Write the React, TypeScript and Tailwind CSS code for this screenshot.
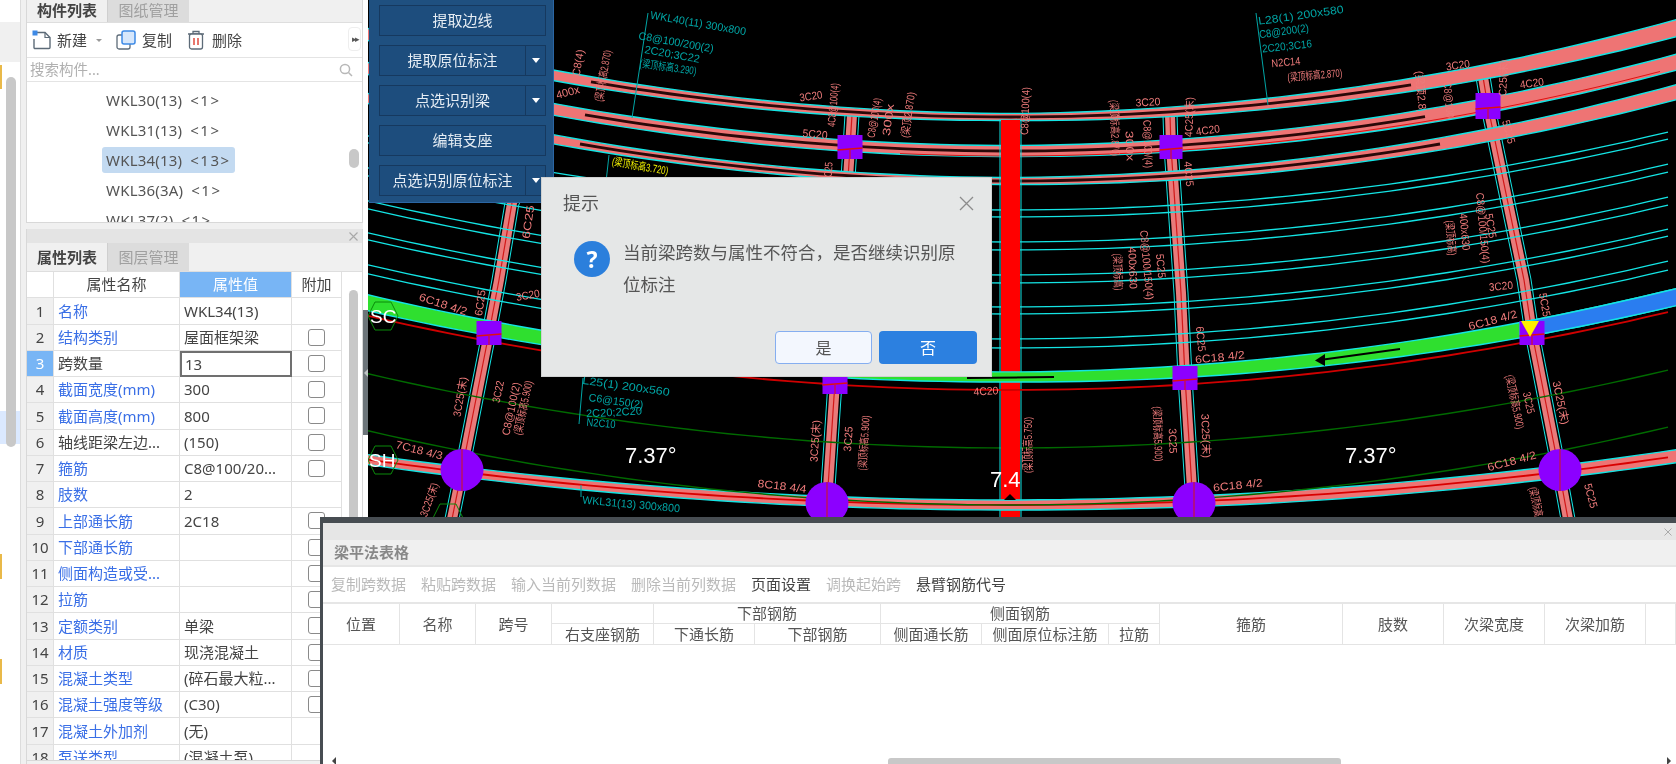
import React from "react";

const P = "#ee7b7b";
const C = "#00a5a5";
const Y = "#f2f200";
const CY = "#14e4e4";

const arc = (yc: number, a: number, x0 = 368, x1 = 1676) => {
  const pts: string[] = [];
  for (let x = x0; x <= x1; x += 20) pts.push(`${x},${(yc - a * (x - 1010) * (x - 1010)).toFixed(1)}`);
  return pts.join(" ");
};

// a curved band whose width grows away from the middle of the drawing
const band = (yc: number, a: number, w0: number, wl: number, wr: number, x0 = 360, x1 = 1690) => {
  const top: string[] = [];
  const bot: string[] = [];
  for (let x = x0; x <= x1; x += 20) {
    const dx = x - 1010;
    const w = w0 + (dx < 0 ? (wl - w0) * (-dx / 642) : (wr - w0) * (dx / 666));
    const y = yc - a * dx * dx;
    top.push(`${x},${(y - w / 2).toFixed(1)}`);
    bot.unshift(`${x},${(y + w / 2).toFixed(1)}`);
  }
  return [...top, ...bot].join(" ");
};

const Line = ({ pts, c, w, dash }: { pts: string; c: string; w: number; dash?: string }) => (
  <polyline points={pts} fill="none" stroke={c} strokeWidth={w} strokeDasharray={dash} />
);

const Beam = ({ yc, a, x0, x1, w0, wl, wr }: { yc: number; a: number; x0: number; x1: number; w0: number; wl: number; wr: number }) => (
  <g>
    <polygon points={band(yc, a, w0, wl, wr)} fill="#ee7474" stroke={CY} strokeWidth={1.4} />
    <Line pts={arc(yc, a, x0, x1)} c="#2a0808" w={2.8} />
  </g>
);

const Col = ({ pts }: { pts: string }) => (
  <g>
    <Line pts={pts} c={CY} w={15} />
    <Line pts={pts} c="#000" w={13} />
    <Line pts={pts} c="#e97a7a" w={10} />
    <Line pts={pts} c="#d01818" w={1.2} />
  </g>
);

const Sq = ({ x, y, w = 25, h = 24 }: { x: number; y: number; w?: number; h?: number }) => (
  <g>
    <rect x={x - w / 2} y={y - h / 2} width={w} height={h} fill="#8c00ff" />
    <line x1={x - w / 2} y1={y + 3} x2={x + w / 2} y2={y + 1} stroke="#e01010" strokeWidth={1.5} />
    <line x1={x} y1={y + 3} x2={x} y2={y + h / 2} stroke="#e01010" strokeWidth={1} />
  </g>
);

const Dot = ({ x, y }: { x: number; y: number }) => (
  <g>
    <ellipse cx={x} cy={y} rx={21.5} ry={21} fill="#8c00ff" />
    <line x1={x} y1={y - 21} x2={x} y2={y + 21} stroke="#d01818" strokeWidth={1} />
  </g>
);

const labels: [number, number, number, number, string, string][] = [
  [579, 63, 27, -80, "C8(4)", P],
  [604, 76, 52, -80, "(梁顶标高2.870)", P],
  [568, 93, 24, -15, "400x", P],
  [698, 24, 97, 10, "WKL40(11) 300x800", C],
  [676, 43, 76, 10, "C8@100/200(2)", C],
  [672, 55, 56, 10, "2C20;3C22", C],
  [668, 68, 57, 8, "(梁顶标高3.290)", C],
  [811, 97, 23, -8, "3C20", P],
  [815, 135, 25, 5, "5C20", P],
  [834, 105, 44, -85, "4C8@100(4)", P],
  [875, 118, 40, -80, "C8@100(4)", P],
  [889, 120, 32, -82, "300x", P],
  [909, 115, 46, -82, "(梁顶2.870)", P],
  [640, 167, 57, 10, "(梁顶标高3.720)", Y],
  [829, 172, 20, -85, "3C25", P],
  [529, 222, 34, -82, "6C25", P],
  [1026, 111, 48, -88, "C8@100(4)", P],
  [1114, 128, 56, 88, "(梁顶标高2.870)", P],
  [1148, 103, 25, -3, "3C20", P],
  [1190, 117, 40, -88, "4C25(末)", P],
  [1208, 131, 24, -8, "4C20", P],
  [1147, 144, 48, 88, "C8@100/(4)", P],
  [1129, 146, 30, 88, "300x", P],
  [1188, 174, 25, 85, "4C25", P],
  [1146, 265, 70, 85, "C8@100/150(4)", P],
  [1132, 268, 42, 88, "400x630", P],
  [1117, 272, 37, 88, "(梁顶标高)", P],
  [1160, 266, 24, 85, "5C25", P],
  [1301, 16, 86, -8, "L28(1) 200x580", C],
  [1284, 32, 50, -8, "C8@200(2)", C],
  [1287, 47, 50, -6, "2C20;3C16", C],
  [1286, 63, 29, -5, "N2C14", P],
  [1315, 76, 55, -5, "(梁顶标高2.870)", P],
  [1458, 66, 24, -8, "3C20", P],
  [1420, 92, 42, 85, "(梁顶2.8)", P],
  [1448, 100, 36, 85, "C8@100", P],
  [1504, 78, 37, -88, "C25(末)", P],
  [1532, 84, 24, -8, "4C20", P],
  [1508, 132, 24, 75, "5C25", P],
  [1482, 228, 71, 85, "C8@100/150(4)", P],
  [1464, 232, 37, 85, "400x630", P],
  [1450, 238, 35, 85, "(梁顶标高)", P],
  [1490, 226, 25, 80, "5C25", P],
  [1501, 287, 24, -5, "3C20", P],
  [1544, 305, 24, 80, "5C25", P],
  [443, 305, 50, 18, "6C18 4/2", P],
  [481, 303, 26, -82, "6C25", P],
  [528, 296, 24, -10, "3C20", P],
  [461, 397, 40, -80, "3C25(末)", P],
  [499, 392, 22, -78, "3C22", P],
  [512, 409, 54, -78, "C8@100(2)", P],
  [524, 408, 55, -78, "(梁顶标高5.900)", P],
  [626, 387, 88, 8, "L25(1) 200x560", C],
  [616, 402, 55, 8, "C6@150(2)", C],
  [614, 413, 56, -3, "2C20;2C20", C],
  [601, 424, 29, 5, "N2C10", C],
  [419, 451, 48, 14, "7C18 4/3", P],
  [782, 487, 49, 7, "8C18 4/4", P],
  [816, 441, 42, -86, "3C25(末)", P],
  [849, 439, 25, -86, "3C25", P],
  [865, 443, 55, -86, "(梁顶标高5.900)", P],
  [631, 505, 98, 5, "WKL31(13) 300x800", C],
  [430, 500, 35, -70, "3C25(末)", P],
  [986, 392, 25, -3, "4C20", P],
  [1029, 445, 56, -90, "(梁顶标高5.750)", P],
  [1200, 339, 25, 85, "6C25", P],
  [1220, 358, 50, -6, "6C18 4/2", P],
  [1157, 434, 55, 88, "(梁顶标高5.900)", P],
  [1172, 441, 25, 88, "3C25", P],
  [1205, 436, 44, 88, "3C25(末)", P],
  [1493, 321, 50, -15, "6C18 4/2", P],
  [1514, 402, 55, 78, "(梁顶标高5.900)", P],
  [1528, 403, 22, 78, "3C25", P],
  [1560, 403, 44, 78, "3C25(末)", P],
  [1512, 462, 50, -15, "6C18 4/2", P],
  [1238, 486, 50, -6, "6C18 4/2", P],
  [1590, 496, 25, 75, "5C25", P],
  [1535, 502, 30, 78, "(梁顶标高", P],
];

const Hex = ({ x, y }: { x: number; y: number }) => (
  <polygon
    points={`${x - 8},${y - 14} ${x + 8},${y - 14} ${x + 15},${y} ${x + 8},${y + 14} ${x - 8},${y + 14} ${x - 15},${y}`}
    fill="none"
    stroke="#0b8a0b"
    strokeWidth={1}
  />
);

function Cad() {
  const a = 0.0002;
  const g = 0.00018;
  const pairs = [210, 217, 242, 250, 275, 283, 307, 314, 339, 348];
  return (
    <svg viewBox="368 0 1308 764" className="block w-full h-full" style={{ fontFamily: "'Liberation Sans','Noto Sans CJK SC',sans-serif" }}>
      <rect x={368} y={0} width={1308} height={764} fill="#000" />
      <Col pts="525,170 512,203 499,280 489,333 462,470 452,519" />
      <Col pts="852,115 850,147 835,382 827,502" />
      <Col pts="1170,115 1171,147 1181,293 1185,377 1193,505" />
      <Col pts="1483,77 1488,107 1524,280 1532,333 1559,470 1570,530" />
      {pairs.map((y) => (
        <polyline key={y} points={arc(y, g)} fill="none" stroke={CY} strokeWidth={1.3} />
      ))}
      <polyline points={arc(448, g)} fill="none" stroke="#006a00" strokeWidth={1.4} />
      <Beam yc={117} a={a} x0={591} x1={1430} w0={7} wl={12} wr={17} />
      <Beam yc={151} a={a} x0={585} x1={1430} w0={11} wl={12} wr={16} />
      <Beam yc={181} a={a} x0={580} x1={1442} w0={7} wl={10} wr={15} />
      <polyline points={arc(156, a, 900, 1676)} fill="none" stroke="#e01010" strokeWidth={1} />
      <rect x={1000} y={120} width={21} height={400} fill="none" stroke={CY} strokeWidth={1} />
      <rect x={1001} y={120} width={19} height={400} fill="#ff0000" />
      <polygon points={band(377, g, 10, 16, 17)} fill="#2fdf2f" stroke={CY} strokeWidth={1.4} />
      <polygon points={band(377, g, 10, 16, 17, 1520, 1690)} fill="#2a7df0" stroke={CY} strokeWidth={1.4} />
      <polyline points={arc(390, g)} fill="none" stroke="#d00000" strokeWidth={1.8} />
      <polyline points="1320,360 1400,349" fill="none" stroke="#000" strokeWidth={2} />
      <polygon points="1315,360.5 1325,354 1325,366" fill="#000" />
      <polyline points="967,378 1054,377" fill="none" stroke="#000" strokeWidth={2} />
      <polygon points={band(505, 0.00011, 10, 10, 13)} fill="#ee7474" stroke={CY} strokeWidth={1.4} />
      <polyline points={arc(505, 0.00011)} fill="none" stroke="#d80000" strokeWidth={1.8} />
      <polyline points={arc(505, g)} fill="none" stroke="#006a00" strokeWidth={1.4} />
      <polygon points="1010,494 1016,500 1004,500" fill="#000" />
      <Sq x={850} y={147} />
      <Sq x={1171} y={147} w={23} />
      <Sq x={1488} y={106} w={25} h={26} />
      <Sq x={489} y={333} />
      <Sq x={835} y={382} />
      <Sq x={1185} y={378} />
      <Sq x={1532} y={333} />
      <polygon points="1521,321 1539,321 1530,337" fill="#ffee00" />
      <Dot x={462} y={470} />
      <Dot x={827} y={503} />
      <Dot x={1194} y={503} />
      <Dot x={1560} y={470} />
      <line x1={648} y1={13} x2={632} y2={118} stroke={C} strokeWidth={1} />
      <line x1={1256} y1={13} x2={1268} y2={105} stroke={C} strokeWidth={1} />
      <line x1={583} y1={378} x2={579} y2={424} stroke={C} strokeWidth={1} />
      <line x1={581} y1={485} x2={581} y2={497} stroke={C} strokeWidth={1} />
      <line x1={609} y1={155} x2={604} y2={200} stroke={C} strokeWidth={1} />
      {labels.map(([x, y, len, r, t, c], i) => (
        <text
          key={i}
          x={x}
          y={y}
          fill={c}
          fontSize={11}
          textAnchor="middle"
          dominantBaseline="middle"
          textLength={len}
          lengthAdjust="spacingAndGlyphs"
          transform={`rotate(${r} ${x} ${y})`}
        >
          {t}
        </text>
      ))}
      <Hex x={383} y={316} />
      <Hex x={383} y={460} />
      <Hex x={448} y={518} />
      <text x={370} y={323} fill="#fff" fontSize={19}>SC</text>
      <text x={369} y={467} fill="#fff" fontSize={19}>SH</text>
      <text x={625} y={463} fill="#fff" fontSize={22}>7.37°</text>
      <text x={1345} y={463} fill="#fff" fontSize={22}>7.37°</text>
      <text x={990} y={487} fill="#fff" fontSize={22}>7.4</text>
    </svg>
  );
}

const rows: [string, string, boolean, boolean][] = [
  ["名称", "WKL34(13)", true, false],
  ["结构类别", "屋面框架梁", true, true],
  ["跨数量", "13", false, true],
  ["截面宽度(mm)", "300", true, true],
  ["截面高度(mm)", "800", true, true],
  ["轴线距梁左边...", "(150)", false, true],
  ["箍筋", "C8@100/20...", true, true],
  ["肢数", "2", true, false],
  ["上部通长筋", "2C18", true, true],
  ["下部通长筋", "", true, true],
  ["侧面构造或受...", "", true, true],
  ["拉筋", "", true, true],
  ["定额类别", "单梁", true, true],
  ["材质", "现浇混凝土", true, true],
  ["混凝土类型", "(碎石最大粒...", true, true],
  ["混凝土强度等级", "(C30)", true, true],
  ["混凝土外加剂", "(无)", true, false],
  ["泵送类型", "(混凝土泵)", true, false],
];

const base = "flex items-center overflow-hidden whitespace-nowrap";
const cell = `${base} border-b border-r border-[#e0e0e0]`;

function PropGrid() {
  return (
    <div className="grid grid-cols-[27px_126px_112px_50px] auto-rows-[26.25px] w-[315px] text-[15px] text-[#444]">
      <div className={`${cell} bg-white`} />
      <div className={`${cell} justify-center bg-white`}>属性名称</div>
      <div className={`${cell} justify-center bg-[#78b5f5] text-white`}>属性值</div>
      <div className={`${cell} justify-center bg-white`}>附加</div>
      {rows.map(([name, val, blue, chk], i) => (
        <React.Fragment key={i}>
          <div className={`${cell} justify-center ${i === 2 ? "bg-[#78b5f5] text-white" : "bg-[#f0f0f0]"}`}>{i + 1}</div>
          <div className={`${cell} pl-1 ${blue ? "text-[#3a6fe6]" : ""}`}>{name}</div>
          <div className={i === 2 ? `${base} pl-[3px] border-2 border-[#707070]` : `${cell} pl-[4px]`}>{val}</div>
          <div className={`${cell} justify-center`}>
            {chk && <span className="block w-[17px] h-[17px] rounded-[3px] border border-[#8a8a8a] bg-white" />}
          </div>
        </React.Fragment>
      ))}
    </div>
  );
}

const Tabs = ({ a, b, tall }: { a: string; b: string; tall?: boolean }) => (
  <div className={`flex shrink-0 bg-[#f0f0f0] border-b border-[#dedede] text-[15px] ${tall ? "h-[29px] leading-[28px]" : "h-[23px] leading-[21px]"}`}>
    <div className="w-[80px] text-center font-bold text-[#444]">{a}</div>
    <div className="w-[82px] text-center bg-[#dcdcdc] text-[#a0a0a0] border-l border-[#cfcfcf]">{b}</div>
  </div>
);

const list = [
  ["WKL30(13)", "<1>", false],
  ["WKL31(13)", "<1>", false],
  ["WKL34(13)", "<13>", true],
  ["WKL36(3A)", "<1>", false],
  ["WKL37(2)", "<1>", false],
] as const;

const ToolBtn = ({ children }: { children: React.ReactNode }) => (
  <button className="h-[31px] flex border border-[#16395f] bg-[#1d4d7d] text-[15px] text-[#e6edf4] items-center justify-center w-full">{children}</button>
);

const SplitBtn = ({ label }: { label: string }) => (
  <div className="h-[31px] flex border border-[#16395f] bg-[#1d4d7d] text-[15px] text-[#e6edf4]">
    <div className="flex-1 flex items-center justify-center whitespace-nowrap">{label}</div>
    <div className="w-[20px] border-l border-[#16395f] flex items-center justify-center">
      <span className="block w-0 h-0 border-x-[4.5px] border-x-transparent border-t-[5px] border-t-white" />
    </div>
  </div>
);

const tbItems: [string, boolean][] = [
  ["复制跨数据", false],
  ["粘贴跨数据", false],
  ["输入当前列数据", false],
  ["删除当前列数据", false],
  ["页面设置", true],
  ["调换起始跨", false],
  ["悬臂钢筋代号", true],
];

const th = "flex items-center justify-center border-r border-b border-[#e4e4e4] whitespace-nowrap";

export default function App() {
  return (
    <div className="relative w-[1676px] h-[764px] overflow-hidden flex bg-[#f0f0f0] font-['Noto_Sans','Noto_Sans_CJK_SC',sans-serif] blur-[0.35px]">
      {/* far-left strip */}
      <div className="relative w-[21px] shrink-0 bg-white border-r border-[#dcdcdc] flex flex-col">
        <div className="h-[22px]" />
        <div className="h-[40px] bg-[#f0f0f0]" />
        <div className="h-[3px]" />
        <div className="h-[24px] border-l-[2px] border-[#e9b949]" />
        <div className="h-[322px]" />
        <div className="h-[33px] bg-[#dbe9ff]" />
        <div className="h-[110px]" />
        <div className="h-[25px] border-l-[2px] border-[#e9b949]" />
        <div className="h-[80px]" />
        <div className="h-[25px] border-l-[2px] border-[#e9b949]" />
        <div className="absolute left-[6px] top-[77px] w-[10px] h-[370px] rounded-[5px] bg-[#c8c8c8]" />
      </div>
      <div className="w-[5px] shrink-0" />

      {/* left panels */}
      <div className="w-[337px] shrink-0 flex flex-col">
        <div className="h-[223px] shrink-0 flex flex-col border-x border-b border-[#d8d8d8] bg-white">
          <Tabs a="构件列表" b="图纸管理" />
          <div className="h-[35px] shrink-0 relative flex items-center border-b border-[#e4e4e4] text-[15px] text-[#444] pl-[5px]">
            <svg width="20" height="20" viewBox="0 0 20 20" className="mr-[5px]">
              <path d="M5 2.5h8l5 5v10a1 1 0 0 1-1 1H3a1 1 0 0 1-1-1V9" fill="#fff" stroke="#5d6b78" strokeWidth="1.4" />
              <path d="M13 2.5v5h5" fill="none" stroke="#5d6b78" strokeWidth="1.2" />
              <rect x="0.5" y="0.5" width="5" height="5" fill="#3e8ae6" />
            </svg>
            <span>新建</span>
            <span className="ml-[9px] w-0 h-0 border-x-[3px] border-x-transparent border-t-[3px] border-t-[#999]" />
            <svg width="20" height="20" viewBox="0 0 20 20" className="ml-[14px] mr-[6px]">
              <rect x="1" y="5" width="13" height="14" rx="2" fill="#fff" stroke="#5d6b78" strokeWidth="1.3" />
              <rect x="6" y="1" width="13" height="13" rx="2" fill="#d7e7fb" stroke="#3e8ae6" strokeWidth="1.5" />
            </svg>
            <span>复制</span>
            <svg width="18" height="20" viewBox="0 0 18 20" className="ml-[15px] mr-[7px]">
              <path d="M1 4h16M6 4V1.5h6V4" fill="none" stroke="#5d6b78" strokeWidth="1.3" />
              <rect x="2.5" y="4" width="13" height="15" rx="2" fill="#fff" stroke="#5d6b78" strokeWidth="1.3" />
              <path d="M7 8v7M11 8v7" stroke="#e04a3e" strokeWidth="1.5" />
            </svg>
            <span>删除</span>
            <div className="absolute left-[321px] top-[4px] w-[13px] h-[24px] rounded-[4px] border border-[#eeeeee] text-[9px] flex items-center justify-center text-[#555] tracking-[-2px]">
              ▸▸
            </div>
          </div>
          <div className="h-[24px] shrink-0 flex items-center justify-between border-b border-[#e4e4e4] pl-[3px] pr-[9px] text-[14.5px] text-[#b0b0b0]">
            <span>搜索构件...</span>
            <svg width="14" height="14" viewBox="0 0 14 14">
              <circle cx="6" cy="6" r="4.6" fill="none" stroke="#b8b8b8" strokeWidth="1.5" />
              <path d="M9.5 9.5L13 13" stroke="#b8b8b8" strokeWidth="1.5" />
            </svg>
          </div>
          <div className="relative flex-1 overflow-hidden pt-[3px] text-[15px] text-[#555]">
            {list.map(([n, c, sel]) => (
              <div key={n} className="h-[30px] flex items-center pl-[75px]">
                <div className={`h-[26px] flex items-center gap-[8px] px-[4px] rounded-[3px] ${sel ? "bg-[#c3daf1]" : ""}`}>
                  <span className="tracking-[0.2px]">{n}</span>
                  <span className="tracking-[1.5px]">{c}</span>
                </div>
              </div>
            ))}
            <div className="absolute right-[3px] top-[67px] w-[10px] h-[19px] rounded-[5px] bg-[#c8c8c8]" />
          </div>
        </div>
        <div className="h-[6px] shrink-0" />
        <div className="flex-1 min-h-0 flex flex-col border-x border-[#d8d8d8] overflow-hidden">
          <div className="h-[14px] shrink-0 bg-[#e4e4e4] flex items-center justify-end pr-[4px] text-[#aaa]">
            <svg width="9" height="9" viewBox="0 0 9 9"><path d="M0.5 0.5l8 8M8.5 0.5l-8 8" stroke="#a8a8a8" strokeWidth="1.1" /></svg>
          </div>
          <Tabs a="属性列表" b="图层管理" tall />
          <div className="flex-1 min-h-0 bg-white flex overflow-hidden mb-[3px] border-b border-[#d8d8d8]">
            <PropGrid />
            <div className="flex-1 pt-[18px] pl-[7px] pr-[4px]">
              <div className="h-[480px] rounded-[5px] bg-[#c8c8c8]" />
            </div>
          </div>
        </div>
      </div>

      {/* splitter */}
      <div className="w-[5px] shrink-0 flex flex-col bg-white">
        <div className="h-[310px]" />
        <div className="h-[125px] bg-[#6d757a] flex items-center justify-center">
          <span className="w-0 h-0 border-y-[4px] border-y-transparent border-r-[4px] border-r-[#c0c4c6]" />
        </div>
      </div>

      {/* CAD canvas */}
      <div className="flex-1 min-w-0 h-[764px]">
        <Cad />
      </div>

      {/* floating tool palette */}
      <div className="absolute left-[369px] top-0 w-[185px] h-[203px] bg-[#1f5080] border-r border-b border-[#2b66a3] pl-[10px] pr-[7px] pt-[5px] flex flex-col gap-[9px]">
        <ToolBtn>提取边线</ToolBtn>
        <SplitBtn label="提取原位标注" />
        <SplitBtn label="点选识别梁" />
        <ToolBtn>编辑支座</ToolBtn>
        <SplitBtn label="点选识别原位标注" />
      </div>

      {/* dialog */}
      <div className="absolute left-[541px] top-[177px] w-[451px] h-[200px] bg-[#e5e7e7] border border-[#cfd1d1] flex flex-col text-[#555]">
        <div className="flex items-center justify-between pl-[21px] pr-[17px] pt-[10px] h-[40px] text-[18px]">
          <span>提示</span>
          <svg width="15" height="15" viewBox="0 0 15 15"><path d="M1 1l13 13M14 1L1 14" stroke="#8c8c8c" strokeWidth="1.3" /></svg>
        </div>
        <div className="flex pl-[32px] pt-[22px]">
          <div className="w-[36px] h-[36px] shrink-0 mt-[1px] rounded-full bg-[#2b7fdc] flex items-center justify-center text-white text-[23px] font-bold leading-none">?</div>
          <p className="w-[346px] ml-[13px] text-[17.5px] leading-[32px] -mt-[4px]">当前梁跨数与属性不符合，是否继续识别原位标注</p>
        </div>
        <div className="mt-auto mb-[12px] flex justify-end gap-[7px] pr-[14px] text-[16px]">
          <button className="w-[97px] h-[33px] rounded-[4px] border border-[#85aef0] bg-[#f3f7fe] text-[#555]">是</button>
          <button className="w-[98px] h-[33px] rounded-[4px] bg-[#2c80e0] text-white">否</button>
        </div>
      </div>

      {/* bottom window */}
      <div className="absolute left-[320px] top-[517px] right-0 bottom-0 border-t-[6px] border-l-[3px] border-[#474d52] bg-white flex flex-col">
        <div className="h-[17px] shrink-0 bg-[#e6e6e6] flex items-center justify-end pr-[4px]">
          <svg width="8" height="8" viewBox="0 0 8 8"><path d="M0.5 0.5l7 7M7.5 0.5l-7 7" stroke="#aaa" strokeWidth="1" /></svg>
        </div>
        <div className="h-[27px] shrink-0 bg-[#f0f0f0] border-b-2 border-[#e6e6e6] flex items-center pl-[11px] text-[15px] font-bold text-[#888]">梁平法表格</div>
        <div className="h-[37px] shrink-0 flex items-center gap-[15px] pl-[8px] border-b-2 border-[#e6e6e6] text-[15px]">
          {tbItems.map(([t, on]) => (
            <span key={t} className={on ? "text-[#444]" : "text-[#bababa]"}>{t}</span>
          ))}
        </div>
        <div className="grid grid-cols-[77px_76px_76px_102px_101px_126px_101px_127px_51px_183px_101px_101px_101px_30px] grid-rows-[20px_21px] text-[15px] text-[#555]">
          <div className={`${th} row-span-2`}>位置</div>
          <div className={`${th} row-span-2`}>名称</div>
          <div className={`${th} row-span-2`}>跨号</div>
          <div className={th} />
          <div className={`${th} col-span-2`}>下部钢筋</div>
          <div className={`${th} col-span-3`}>侧面钢筋</div>
          <div className={`${th} row-span-2`}>箍筋</div>
          <div className={`${th} row-span-2`}>肢数</div>
          <div className={`${th} row-span-2`}>次梁宽度</div>
          <div className={`${th} row-span-2`}>次梁加筋</div>
          <div className={`${th} row-span-2`} />
          <div className={th}>右支座钢筋</div>
          <div className={th}>下通长筋</div>
          <div className={th}>下部钢筋</div>
          <div className={th}>侧面通长筋</div>
          <div className={th}>侧面原位标注筋</div>
          <div className={th}>拉筋</div>
        </div>
        <div className="flex-1" />
        <div className="h-[6px] shrink-0 flex items-center justify-between pl-[9px] pr-[5px]">
          <span className="w-0 h-0 border-y-[4px] border-y-transparent border-r-[4px] border-r-[#444]" />
          <div className="ml-[552px] w-[453px] h-[6px] rounded-t-[3px] bg-[#c8c8c8]" />
          <span className="ml-auto w-0 h-0 border-y-[4px] border-y-transparent border-l-[4px] border-l-[#444]" />
        </div>
      </div>
    </div>
  );
}
